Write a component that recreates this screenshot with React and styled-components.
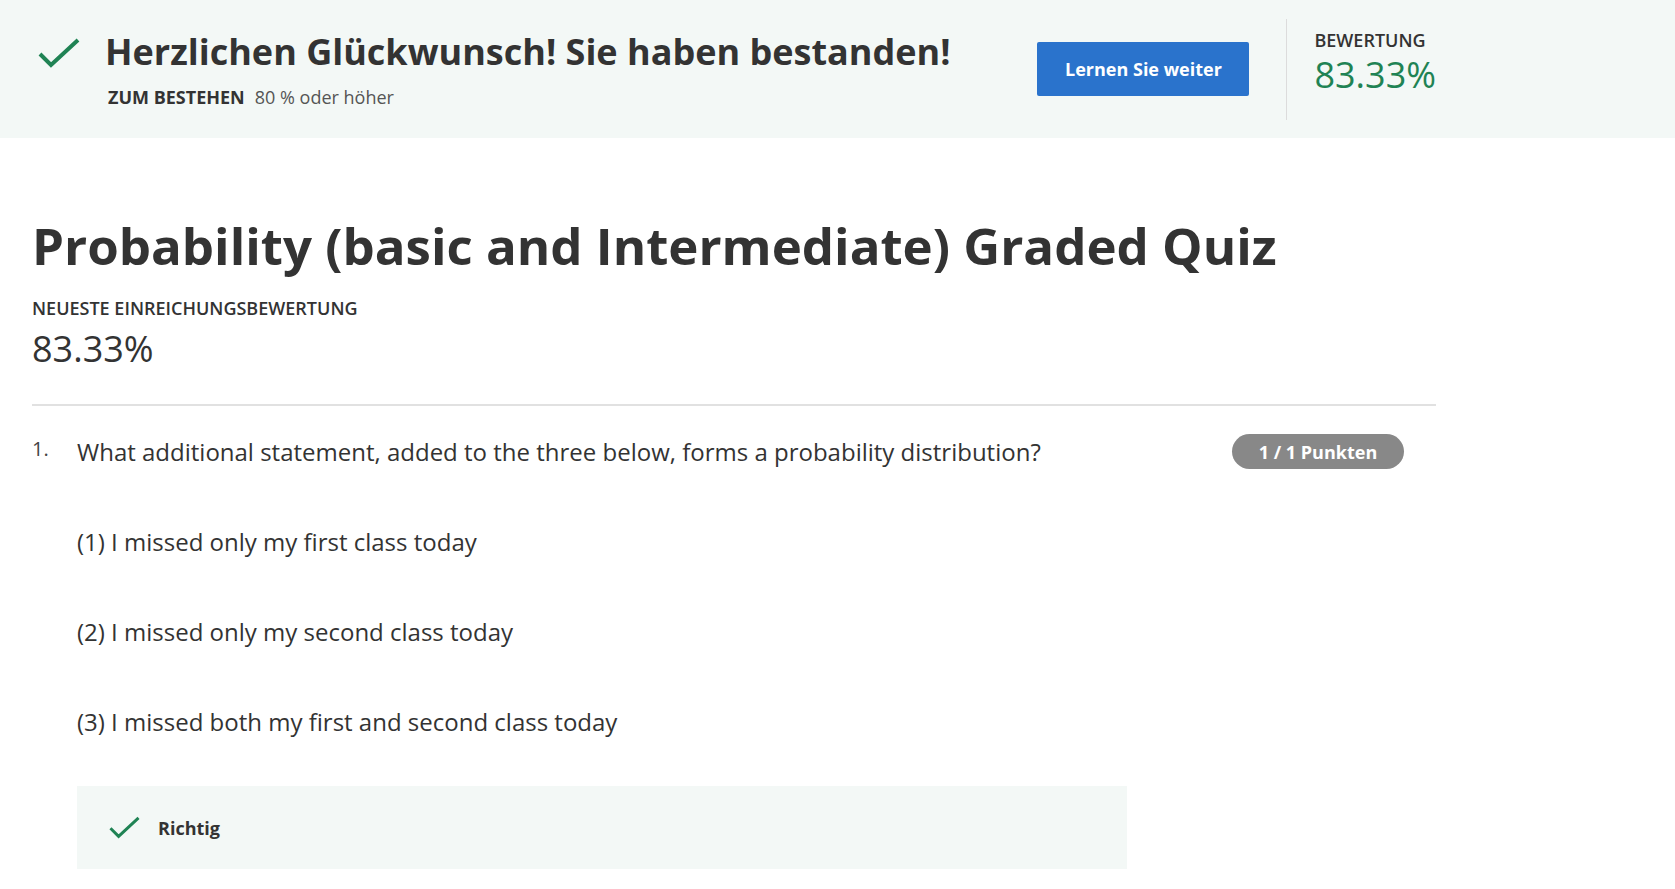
import React from "react";
import styled, { createGlobalStyle } from "styled-components";

const Global = createGlobalStyle`
  html, body { margin: 0; padding: 0; background: #fff; }
  body { font-family: "Open Sans", "Liberation Sans", sans-serif; color: #333; }
  * { box-sizing: border-box; }
`;

const Page = styled.div`
  width: 1675px;
  min-height: 889px;
  background: #fff;
`;

const Banner = styled.header`
  background: #f3f8f6;
  height: 138px;
  display: flex;
  align-items: center;
`;

const BannerInner = styled.div`
  width: 1436px;
  height: 100%;
  padding-left: 38px;
  display: flex;
  align-items: center;
`;

const BannerIcon = styled.div`
  align-self: flex-start;
  margin-top: 38px;
  margin-right: 25px;
  width: 42px;
  height: 32px;
  display: flex;
`;

const BannerText = styled.div`
  flex: 1;
  display: flex;
  flex-direction: column;
  gap: 10px;
`;

const Headline = styled.h1`
  margin: 0;
  font-size: 36px;
  line-height: 46px;
  font-weight: 700;
  color: #333;
`;

const PassLine = styled.div`
  font-size: 18px;
  line-height: 24px;
  color: #555;
  padding-left: 3px;
`;

const PassLabel = styled.span`
  font-weight: 700;
  color: #333;
  margin-right: 10px;
`;

const PrimaryButton = styled.button`
  width: 212px;
  height: 54px;
  border: none;
  border-radius: 2px;
  background: #2a73cc;
  color: #fff;
  font-family: inherit;
  font-size: 18px;
  font-weight: 700;
  cursor: pointer;
`;

const VDivider = styled.div`
  width: 1px;
  height: 101px;
  background: #dcdcdc;
  margin: 0 27px 0 37px;
  align-self: center;
`;

const ScoreBlock = styled.div`
  align-self: flex-start;
  margin-top: 27px;
  display: flex;
  flex-direction: column;
`;

const SmallCaps = styled.div`
  font-size: 18px;
  line-height: 26px;
  font-weight: 600;
  color: #333;
  text-transform: uppercase;
`;

const ScoreValue = styled.div`
  font-size: 36px;
  line-height: 44px;
  font-weight: 400;
  color: ${(p) => p.$color || "#333"};
`;

const Main = styled.main`
  width: 1468px;
  padding: 0 32px;
`;

const Title = styled.h2`
  margin: 0;
  padding-top: 74px;
  font-size: 51px;
  line-height: 66px;
  font-weight: 700;
  color: #333;
`;

const LatestBlock = styled.div`
  margin-top: 17px;
  display: flex;
  flex-direction: column;
  gap: 6px;
`;

const Rule = styled.hr`
  margin: 33px 0 0;
  border: none;
  border-top: 2px solid #e1e1e1;
`;

const QuestionRow = styled.div`
  display: flex;
  align-items: flex-start;
  margin-top: 28px;
`;

const QNumber = styled.div`
  width: 45px;
  font-size: 20px;
  line-height: 30px;
  color: #444;
`;

const QBody = styled.div`
  flex: 1;
`;

const QHeadLine = styled.div`
  display: flex;
  justify-content: space-between;
  align-items: center;
`;

const QText = styled.p`
  margin: 0;
  font-size: 24px;
  line-height: 34px;
  color: #333;
`;

const Badge = styled.span`
  background: #888;
  color: #fff;
  font-size: 18px;
  font-weight: 700;
  height: 35px;
  width: 172px;
  border-radius: 18px;
  display: inline-flex;
  align-items: center;
  justify-content: center;
  margin-right: 32px;
`;

const Option = styled.p`
  margin: 56px 0 0;
  font-size: 24px;
  line-height: 34px;
  color: #333;
`;

const Feedback = styled.div`
  margin-top: 47px;
  width: 1050px;
  height: 83px;
  background: #f3f8f6;
  display: flex;
  align-items: center;
  padding-left: 32px;
  gap: 18px;
`;

const FeedbackText = styled.span`
  font-size: 18px;
  font-weight: 700;
  color: #333;
`;

const Check = ({ w, h, sw }) => (
  <svg width={w} height={h} viewBox="0 0 42 30" fill="none">
    <path d="M2 16 L13 27 L40 2" stroke="#1f8354" strokeWidth={sw} strokeLinecap="butt" strokeLinejoin="miter" />
  </svg>
);

export default function App() {
  return (
    <Page>
      <Global />
      <Banner>
        <BannerInner>
          <BannerIcon>
            <Check w={42} h={30} sw={4} />
          </BannerIcon>
          <BannerText>
            <Headline>Herzlichen Glückwunsch! Sie haben bestanden!</Headline>
            <PassLine>
              <PassLabel>ZUM BESTEHEN</PassLabel>80 % oder höher
            </PassLine>
          </BannerText>
          <PrimaryButton>Lernen Sie weiter</PrimaryButton>
          <VDivider />
          <ScoreBlock>
            <SmallCaps>Bewertung</SmallCaps>
            <ScoreValue $color="#1f8354">83.33%</ScoreValue>
          </ScoreBlock>
        </BannerInner>
      </Banner>
      <Main>
        <Title>Probability (basic and Intermediate) Graded Quiz</Title>
        <LatestBlock>
          <SmallCaps>Neueste Einreichungsbewertung</SmallCaps>
          <ScoreValue>83.33%</ScoreValue>
        </LatestBlock>
        <Rule />
        <QuestionRow>
          <QNumber>1.</QNumber>
          <QBody>
            <QHeadLine>
              <QText>What additional statement, added to the three below, forms a probability distribution?</QText>
              <Badge>1 / 1 Punkten</Badge>
            </QHeadLine>
            <Option>(1) I missed only my first class today</Option>
            <Option>(2) I missed only my second class today</Option>
            <Option>(3) I missed both my first and second class today</Option>
            <Feedback>
              <Check w={31} h={23} sw={4} />
              <FeedbackText>Richtig</FeedbackText>
            </Feedback>
          </QBody>
        </QuestionRow>
      </Main>
    </Page>
  );
}
